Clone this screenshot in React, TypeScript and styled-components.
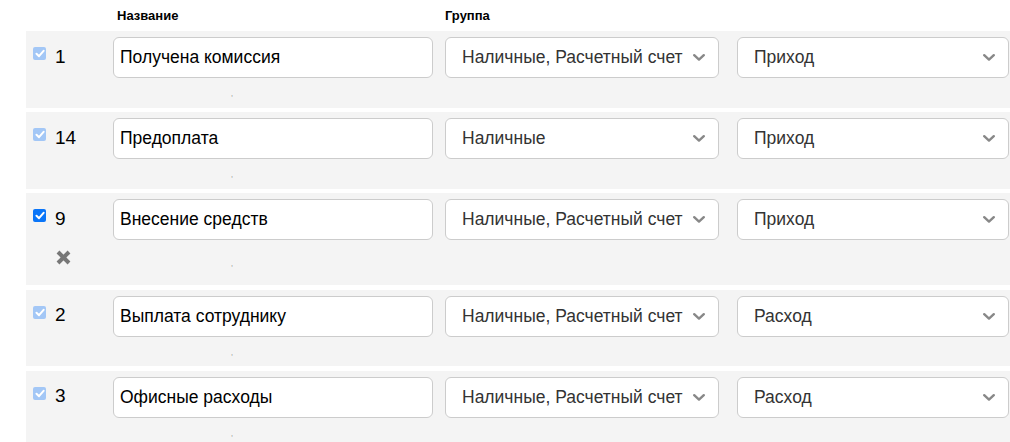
import React from "react";
import styled, { createGlobalStyle } from "styled-components";

const GlobalStyle = createGlobalStyle`
  html, body { margin: 0; padding: 0; background: #fff; }
  body { font-family: "Liberation Sans", Arial, sans-serif; }
`;

const Page = styled.div`
  padding-left: 26px;
  width: 1010px;
  box-sizing: border-box;
`;

const Header = styled.div`
  display: flex;
  align-items: center;
  height: 31px;
  font-size: 13px;
  font-weight: bold;
  color: #000;
`;

const HeadCell = styled.div<{ $w: number; $pl?: number; $ml?: number }>`
  width: ${(p) => p.$w}px;
  padding-left: ${(p) => p.$pl ?? 0}px;
  margin-left: ${(p) => p.$ml ?? 0}px;
  box-sizing: border-box;
`;

const Row = styled.div<{ $tall?: boolean }>`
  background: #f4f4f4;
  height: ${(p) => (p.$tall ? 92 : 76.5)}px;
  margin-bottom: 4.5px;
  padding-top: 6px;
  box-sizing: border-box;
`;

const TopLine = styled.div`
  display: flex;
  align-items: flex-start;
  height: 41px;
`;

const Lead = styled.div`
  width: 87px;
  display: flex;
  align-items: flex-start;
  padding-left: 7px;
  box-sizing: border-box;
`;

const Check = styled.span<{ $disabled?: boolean }>`
  width: 13px;
  height: 13px;
  margin-top: 10px;
  border-radius: 2px;
  background: ${(p) => (p.$disabled ? "#a3c7f6" : "#0a75f8")};
  display: flex;
  align-items: center;
  justify-content: center;
  flex-shrink: 0;
`;

const Num = styled.span`
  margin-left: 9px;
  margin-top: 8.5px;
  font-size: 19px;
  line-height: 21px;
  color: #000;
`;

const NameInput = styled.input`
  width: 320px;
  height: 41px;
  box-sizing: border-box;
  border: 1px solid #cccccc;
  border-radius: 6px;
  padding: 0 6px;
  font-family: "Liberation Sans", Arial, sans-serif;
  font-size: 17.5px;
  color: #000;
  background: #fff;
  outline: none;
`;

const SelectBox = styled.div<{ $w: number; $ml: number }>`
  width: ${(p) => p.$w}px;
  margin-left: ${(p) => p.$ml}px;
  height: 41px;
  box-sizing: border-box;
  border: 1px solid #cccccc;
  border-radius: 6px;
  background: #fff;
  display: flex;
  align-items: center;
  justify-content: space-between;
  padding: 0 13px 0 16px;
  font-size: 17.5px;
  color: #333;
  white-space: nowrap;
`;

const BottomLine = styled.div`
  display: flex;
  align-items: flex-start;
`;

const IconCell = styled.div`
  width: 87px;
  padding-left: 30px;
  padding-top: 10px;
  box-sizing: border-box;
  display: flex;
`;

const Hint = styled.span<{ $top: number }>`
  margin-left: 118px;
  margin-top: ${(p) => p.$top}px;
  font-size: 7px;
  line-height: 7px;
  color: #777;
`;

const CheckMark = () => (
  <svg width="10" height="9" viewBox="0 0 10 9">
    <path d="M1.5 4.8 L4 7.2 L8.6 1.8" fill="none" stroke="#fff" strokeWidth="2" strokeLinecap="round" strokeLinejoin="round" />
  </svg>
);

const Chevron = () => (
  <svg width="12" height="7" viewBox="0 0 12 7">
    <path d="M1.2 1.2 L6 5.6 L10.8 1.2" fill="none" stroke="#888" strokeWidth="2.4" strokeLinecap="round" strokeLinejoin="round" />
  </svg>
);

const RemoveIcon = () => (
  <svg width="15" height="15" viewBox="0 0 15 15">
    <path d="M2 2 L13 13 M13 2 L2 13" fill="none" stroke="#777" strokeWidth="4" strokeLinecap="butt" />
  </svg>
);

type Item = { id: number; name: string; group: string; type: string; active?: boolean };

const items: Item[] = [
  { id: 1, name: "Получена комиссия", group: "Наличные, Расчетный счет", type: "Приход" },
  { id: 14, name: "Предоплата", group: "Наличные", type: "Приход" },
  { id: 9, name: "Внесение средств", group: "Наличные, Расчетный счет", type: "Приход", active: true },
  { id: 2, name: "Выплата сотруднику", group: "Наличные, Расчетный счет", type: "Расход" },
  { id: 3, name: "Офисные расходы", group: "Наличные, Расчетный счет", type: "Расход" },
];

export default function App() {
  return (
    <>
      <GlobalStyle />
      <Page>
        <Header>
          <HeadCell $w={87} />
          <HeadCell $w={320} $pl={4}>Название</HeadCell>
          <HeadCell $w={274} $ml={12}>Группа</HeadCell>
        </Header>
        {items.map((it) => (
          <Row key={it.id} $tall={it.active}>
            <TopLine>
              <Lead>
                <Check $disabled={!it.active}>
                  <CheckMark />
                </Check>
                <Num>{it.id}</Num>
              </Lead>
              <NameInput defaultValue={it.name} />
              <SelectBox $w={274} $ml={12}>
                <span>{it.group}</span>
                <Chevron />
              </SelectBox>
              <SelectBox $w={272} $ml={18}>
                <span>{it.type}</span>
                <Chevron />
              </SelectBox>
            </TopLine>
            <BottomLine>
              {it.active ? (
                <IconCell>
                  <RemoveIcon />
                </IconCell>
              ) : (
                <IconCell />
              )}
              <Hint $top={it.active ? 20 : 12}>,</Hint>
            </BottomLine>
          </Row>
        ))}
      </Page>
    </>
  );
}
